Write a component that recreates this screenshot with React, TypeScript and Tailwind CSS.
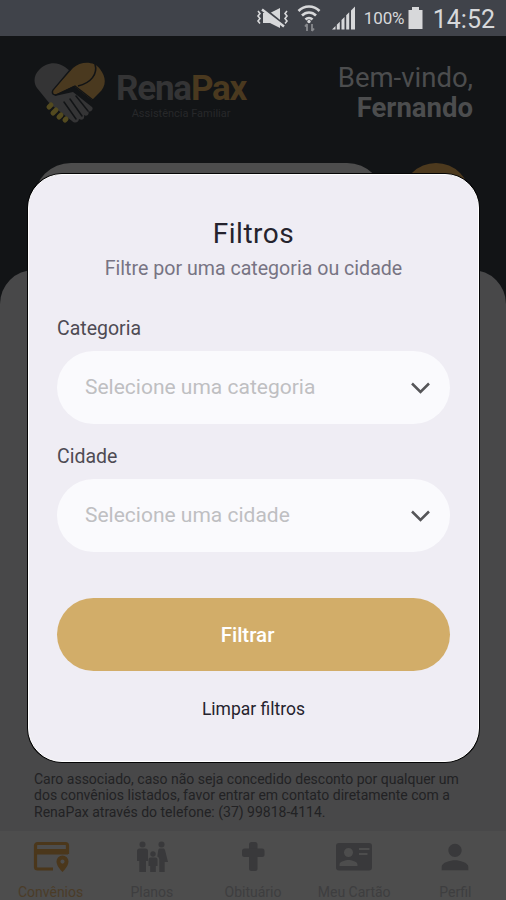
import type { ReactNode } from 'react';
import { MdPerson } from 'react-icons/md';
import { clsx } from 'clsx';

const tabs = [
  { label: 'Convênios', icon: <CardPinIcon />, active: true },
  { label: 'Planos', icon: <FamilyIcon /> },
  { label: 'Obituário', icon: <CrossIcon /> },
  { label: 'Meu Cartão', icon: <IdCardIcon /> },
  { label: 'Perfil', icon: <MdPerson className="size-10" /> },
];

const fields = [
  { label: 'Categoria', placeholder: 'Selecione uma categoria' },
  { label: 'Cidade', placeholder: 'Selecione uma cidade' },
];

function CardPinIcon() {
  return (
    <svg width="38" height="34" viewBox="0 0 38 34" fill="none">
      <path d="M21 29H5.500a2 2 0 0 1-2-2V5.500a2 2 0 0 1 2-2h28a2 2 0 0 1 2 2V14" stroke="currentColor" strokeWidth="3.200" />
      <path d="M3 9h33v5.500H3z" fill="currentColor" />
      <path
        fillRule="evenodd"
        d="M30.500 15.500a6 6 0 0 0-6 6c0 4.800 6 10.500 6 10.500s6-5.700 6-10.500a6 6 0 0 0-6-6Zm0 4a2.100 2.100 0 1 1 0 4.200 2.100 2.100 0 0 1 0-4.200Z"
        fill="currentColor"
      />
    </svg>
  );
}

function FamilyIcon() {
  return (
    <svg width="32" height="34" viewBox="0 0 32 34" fill="currentColor">
      <circle cx="6.500" cy="4.500" r="3" />
      <circle cx="25.500" cy="4.500" r="3" />
      <circle cx="17" cy="14" r="2.700" />
      <path d="M4 8.500h5.500a2.500 2.500 0 0 1 2.500 2.500v10H10v11H3.300V21H1V11a2.500 2.500 0 0 1 3-2.500Z" />
      <path d="M14.500 17.500h5a2 2 0 0 1 2 2V26h-1.700v6h-5.600v-6h-1.700v-6.500a2 2 0 0 1 2-2Z" />
      <path d="M24 8.500h3c1 0 1.700.7 2 1.600L32 22h-3.300v10h-5.400V19.500c0-1.500-.8-2.500-2-3l.9-6.300c.2-1 .9-1.700 1.800-1.700Z" />
    </svg>
  );
}

function CrossIcon() {
  return (
    <svg width="26" height="34" viewBox="0 0 26 34" fill="currentColor">
      <rect x="9" y="2" width="8.500" height="29" rx="2.500" />
      <rect x="2" y="8.500" width="22.500" height="8.500" rx="2.500" />
    </svg>
  );
}

function IdCardIcon() {
  return (
    <svg width="38" height="34" viewBox="0 0 38 34" fill="currentColor">
      <path
        fillRule="evenodd"
        d="M4 3h30a3 3 0 0 1 3 3v21.500a3 3 0 0 1-3 3H4a3 3 0 0 1-3-3V6a3 3 0 0 1 3-3ZM13.500 8a4.500 4.500 0 1 0 0 9 4.500 4.500 0 0 0 0-9ZM4.500 26h18v-1.500c0-3-6-4.500-9-4.500s-9 1.500-9 4.500V26ZM24 8v1.900h10.500V8H24Zm0 5v1.900h8.500V13H24Z"
      />
    </svg>
  );
}

function StatusBar() {
  return (
    <div className="flex h-9 items-center justify-end bg-[#40434a] pr-[11px] text-[#d7d8da]">
      <svg width="36" height="24" viewBox="0 0 36 24" fill="none" stroke="currentColor" strokeWidth="1.600">
        <path d="M4 5l2 2.500-2 2.500 2 2.500-2 2.500 2 2.500M33 5l-2 2.500 2 2.500-2 2.500 2 2.500-2 2.500" />
        <path d="M9 7h7l10-5v20l-10-5H9z" fill="currentColor" stroke="none" />
        <path d="M9.500 2.500l21 17" stroke="#40434a" strokeWidth="3" />
        <path d="M8 3.500l22 17" strokeWidth="2.500" />
      </svg>
      <svg className="ml-1.5" width="26" height="28" viewBox="0 0 26 28" fill="none" stroke="currentColor" strokeWidth="2.600">
        <path d="M2.500 7c6-6 15-6 21 0M6 11.500c4-4 10-4 14 0M9.500 15.500c2-2 5-2 7 0" />
        <circle cx="13" cy="17.500" r="1.700" fill="currentColor" stroke="none" />
        <path d="M11 20v7M9 22.500l2-2.500M16 20v7M18 24.500L16 27" stroke="#888a8e" strokeWidth="1.800" />
      </svg>
      <svg className="ml-2.5" width="24" height="24" viewBox="0 0 24 24" fill="currentColor">
        <path d="M0 23.500 3.500 20v3.500zM4.800 18.800l3-3v7.700h-3zM9.500 14l3-3v12.500h-3zM14.200 9.300l3-3v17.200h-3zM19 4.500l4-4v23h-4z" />
      </svg>
      <span className="ml-2 w-10 pt-0.5 text-[17px] tracking-[-0.1px] whitespace-nowrap">100%</span>
      <svg className="ml-1" width="15" height="24" viewBox="0 0 15 24" fill="currentColor">
        <path d="M4 1h7v3h3.500v19H.5V4H4z" />
      </svg>
      <span className="ml-2.5 pt-[3px] text-[25px]">14:52</span>
    </div>
  );
}

function Logo() {
  return (
    <div className="flex items-center gap-2.5">
      <svg width="72" height="64" viewBox="0 0 72 64">
        <path d="M5 8C12 0 23-1 31 5l5 4-17 20 2 5 18-4 19 15c2 2-1 6-4 4 2 3-1 6-4 4 1 4-2 6-5 4 0 3-4 5-7 2L16 42 3 26C-1 20 0 13 5 8Z" fill="#343435" />
        <path d="M39 6C47-1 60-1 66 7c7 9 6 18-1 24l-7 7-18-14-17 8c-4 2-6-1-4-4L39 6Z" fill="#4a391f" />
        <path d="M61 2c3 10-4 19-17 22" fill="none" stroke="#121416" strokeWidth="1.600" />
        <path d="M36 8 19 28c-2 4 1 6 5 4l17-8 18 14" fill="none" stroke="#121416" strokeWidth="1.300" />
        <path d="M42 34l12 15M36 37l12 17M30 40l12 17" stroke="#121416" strokeWidth="1.500" strokeLinecap="round" />
        <g stroke="#534a1f" strokeWidth="5" strokeLinecap="round">
          <path d="M17 43l-2 2M22 48l-3 3M27 53l-2 2M32 57l-1 1" />
        </g>
      </svg>
      <div className="flex flex-col items-center">
        <div className="pt-1 text-[35px] leading-[34px] font-bold tracking-[-1.2px] text-[#343435]">
          Rena<span className="text-[#4a391f]">Pax</span>
        </div>
        <div className="mt-0.5 text-[11px] leading-3 text-[#27282a]">Assistência Familiar</div>
      </div>
    </div>
  );
}

function Field({ label, placeholder }: { label: string; placeholder: string }) {
  return (
    <div className="h-32">
      <div className="h-9 pt-0.5 text-[19.500px] leading-6 text-[#4e4b53]">{label}</div>
      <button className="flex h-[73px] w-full items-center justify-between rounded-full bg-[#fafafd] pr-5 pl-7 text-left text-[21px] text-[#bfbfc2]">
        {placeholder}
        <svg width="19" height="12" viewBox="0 0 19 12" fill="none" stroke="#555558" strokeWidth="2.500">
          <path d="M1 1.500l8.500 8.500L18 1.500" />
        </svg>
      </button>
    </div>
  );
}

function Dialog({ children }: { children: ReactNode }) {
  return (
    <div className="absolute top-[174px] left-[28px] h-[588px] w-[451px] rounded-[34px] border border-white bg-[#efedf4] px-7 pt-[43px] shadow-[0_0_0_1px_#050506]">
      {children}
    </div>
  );
}

export default function App() {
  return (
    <div className="relative flex h-[900px] w-[506px] flex-col overflow-hidden bg-[#121416] font-[Roboto,sans-serif]">
      <StatusBar />

      <header className="flex h-[127px] items-start justify-between pt-[26px] pr-[33px] pl-[34px]">
        <Logo />
        <div className="pt-px text-right text-[27.500px] leading-[30px] text-[#4c4d4e]">
          <div>Bem-vindo,</div>
          <div className="font-bold">Fernando</div>
        </div>
      </header>

      <div className="flex h-[107px] justify-between pr-9 pl-[34px]">
        <div className="h-[74px] w-[350px] rounded-full bg-[#4d4d4d]" />
        <div className="size-[68px] rounded-full bg-[#4d3a1e]" />
      </div>

      <main className="flex flex-1 flex-col justify-end rounded-t-[34px] bg-[#484849] px-[34px] pb-[11px]">
        <p className="text-[14px] leading-[16.500px] whitespace-nowrap text-[#222224]">
          Caro associado, caso não seja concedido desconto por qualquer um
          <br />
          dos convênios listados, favor entrar em contato diretamente com a
          <br />
          RenaPax através do telefone: (37) 99818-4114.
        </p>
      </main>

      <nav className="grid h-[69px] grid-cols-5 bg-[#4d4d4d]">
        {tabs.map((tab) => (
          <div
            key={tab.label}
            className={clsx('flex flex-col items-center pt-[9px]', tab.active ? 'text-[#4b371b]' : 'text-[#39393b]')}
          >
            <div className="flex h-[34px] items-center">{tab.icon}</div>
            <span className="mt-2 text-[14px] leading-5 whitespace-nowrap opacity-75">{tab.label}</span>
          </div>
        ))}
      </nav>

      <Dialog>
        <h1 className="text-center text-[28px] leading-8 tracking-[0.5px] text-[#25232d]">Filtros</h1>
        <p className="mt-[5px] mb-8 text-center text-[19.600px] leading-7 whitespace-nowrap text-[#777483]">
          Filtre por uma categoria ou cidade
        </p>
        {fields.map((field) => (
          <Field key={field.label} {...field} />
        ))}
        <button className="mt-[27px] flex h-[73px] w-full items-center justify-center rounded-full bg-[#d2ad69] pt-0.5 pr-3 text-[20.500px] font-medium text-white">
          Filtrar
        </button>
        <button className="mt-[26px] w-full text-center text-[17.500px] leading-6 text-[#25232d]">Limpar filtros</button>
      </Dialog>
    </div>
  );
}
